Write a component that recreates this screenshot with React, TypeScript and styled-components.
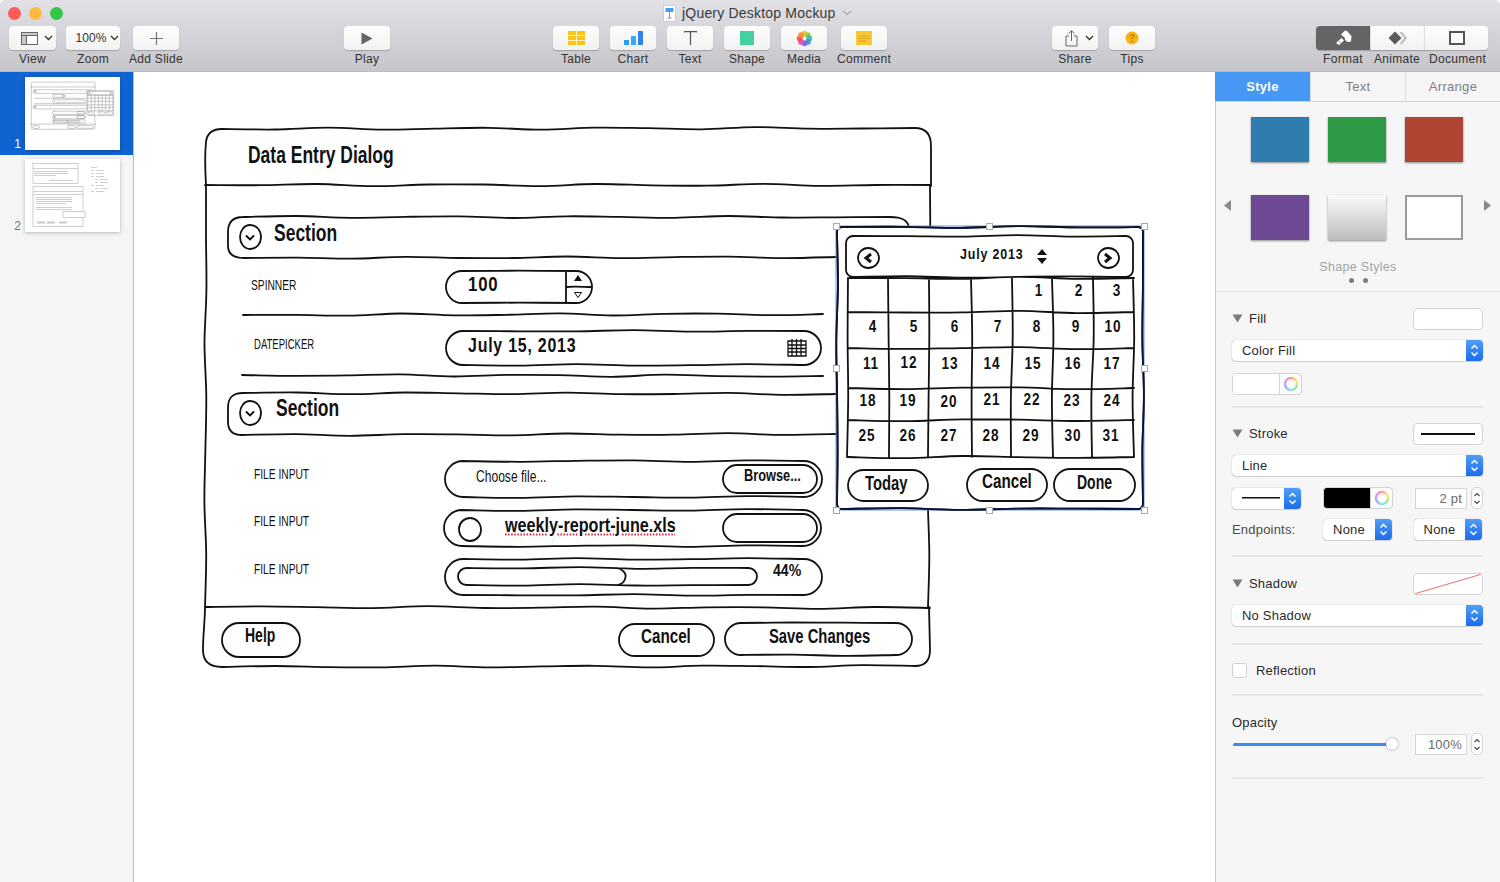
import React from "react";
import styled, { createGlobalStyle } from "styled-components";

const GlobalStyle = createGlobalStyle`
  html, body { margin: 0; padding: 0; height: 100%; background: #fff; overflow: hidden; }
  body { font-family: "Liberation Sans", Arial, sans-serif; }
  #root { height: 100%; }
`;

/* ---------- hand drawn line helpers ---------- */

type Pt = [number, number];

const n1 = (v: number) => Math.round(v * 10) / 10;

// wobbly line from a to b, returned as C segments (no moveto)
function wave(x1: number, y1: number, x2: number, y2: number, seed: number, amp = 0.9) {
  const len = Math.hypot(x2 - x1, y2 - y1);
  if (len < 1) return "";
  const n = Math.max(1, Math.round(len / 55));
  const nx = -(y2 - y1) / len;
  const ny = (x2 - x1) / len;
  const pts: Pt[] = [];
  for (let i = 0; i <= n; i++) {
    const t = i / n;
    const o = i === 0 || i === n ? 0 : amp * Math.sin(seed * 12.9 + i * 2.3);
    pts.push([x1 + (x2 - x1) * t + nx * o, y1 + (y2 - y1) * t + ny * o]);
  }
  let d = "";
  for (let i = 0; i < n; i++) {
    const p0 = pts[Math.max(0, i - 1)];
    const p1 = pts[i];
    const p2 = pts[i + 1];
    const p3 = pts[Math.min(n, i + 2)];
    d += `C${n1(p1[0] + (p2[0] - p0[0]) / 6)} ${n1(p1[1] + (p2[1] - p0[1]) / 6)} ${n1(p2[0] - (p3[0] - p1[0]) / 6)} ${n1(p2[1] - (p3[1] - p1[1]) / 6)} ${n1(p2[0])} ${n1(p2[1])}`;
  }
  return d;
}

const stroke = (x1: number, y1: number, x2: number, y2: number, seed: number, amp = 0.9) =>
  `M${x1} ${y1}${wave(x1, y1, x2, y2, seed, amp)}`;

function rrect(x1: number, y1: number, x2: number, y2: number, r: number, seed: number) {
  const k = r * 0.45;
  return (
    `M${x1 + r} ${y1}` +
    wave(x1 + r, y1, x2 - r, y1, seed) +
    `C${x2 - k} ${y1} ${x2} ${y1 + k} ${x2} ${y1 + r}` +
    wave(x2, y1 + r, x2, y2 - r, seed + 1) +
    `C${x2} ${y2 - k} ${x2 - k} ${y2} ${x2 - r} ${y2}` +
    wave(x2 - r, y2, x1 + r, y2, seed + 2) +
    `C${x1 + k} ${y2} ${x1} ${y2 - k} ${x1} ${y2 - r}` +
    wave(x1, y2 - r, x1, y1 + r, seed + 3) +
    `C${x1} ${y1 + k} ${x1 + k} ${y1} ${x1 + r} ${y1}Z`
  );
}

const pill = (x1: number, y1: number, x2: number, y2: number, seed: number) =>
  rrect(x1, y1, x2, y2, (y2 - y1) / 2, seed);

const dialogPaths = [
  // header
  "M206 185C205 168 205 152 206 142C207 133 213 129 222 129" +
    wave(222, 129, 915, 128, 1, 1.2) +
    "C925 128 931 133 931 146L931 186",
  stroke(205, 185, 931, 185, 2, 1.2),
  // sides
  stroke(206, 185, 205, 607, 3, 1.1),
  stroke(930, 186, 928, 607, 4, 1.1),
  // footer
  stroke(205, 607, 930, 608, 5, 1.1),
  "M205 607C205 620 203 635 203 650C203 662 210 667 222 667" +
    wave(222, 667, 915, 666, 6, 1) +
    "C925 666 930 660 930 650L929 607",
  // first section bar
  "M836 257" +
    wave(836, 257, 244, 258, 7, 1) +
    "C233 258 228 254 228 246L228 232C228 222 233 217 243 217" +
    wave(243, 217, 890, 217, 8, 1) +
    "C902 217 908 220 909 228",
  // second section bar
  "M836 434" +
    wave(836, 434, 242, 435, 9, 1) +
    "C232 435 228 430 228 422L228 408C228 398 232 393 243 393" +
    wave(243, 393, 836, 394, 10, 1),
  // spinner
  pill(446, 271, 592, 303, 11),
  "M566 271L566 303M566 287C575 286 584 287 592 287",
  // rows
  stroke(243, 315, 823, 314, 12, 1.2),
  pill(446, 331, 821, 365, 13),
  stroke(242, 375, 823, 376, 14, 1.2),
  // file inputs
  pill(445, 461, 822, 497, 15),
  pill(723, 465, 817, 493, 16),
  pill(444, 510, 821, 546, 17),
  pill(723, 514, 817, 542, 18),
  "M470 518C476 518 481 523 481 530C481 536 476 541 470 541C464 541 459 536 459 529C459 523 464 518 470 518Z",
  pill(445, 559, 822, 595, 19),
  pill(458, 568, 757, 585, 20),
  "M617 568C624 570 627 574 625 579C624 582 622 584 618 585",
  // footer buttons
  pill(222, 623, 300, 657, 21),
  pill(619, 624, 714, 656, 22),
  pill(725, 623, 912, 655, 23),
  // section arrows
  "M250 225C257 225 261 231 261 237C261 243 257 249 250 249C244 249 240 243 240 237C240 231 244 225 250 225Z",
  "M246.500 236L250 239.500L253.500 236",
  "M250 401C257 401 261 407 261 413C261 419 257 425 250 425C244 425 240 419 240 413C240 407 244 401 250 401Z",
  "M246.500 412L250 415.500L253.500 412",
];

const COLS = [848, 888, 929, 971, 1012, 1052, 1093, 1133];
const ROWS = [278, 312, 348, 388, 420, 457];

const calendarPaths = [
  rrect(846, 236, 1133, 277, 7, 31),
  "M868 248C875 248 879 253 879 258C879 263 875 268 868 268C862 268 858 263 858 258C858 253 862 248 868 248Z",
  "M1108 248C1115 248 1119 253 1119 258C1119 263 1115 268 1108 268C1102 268 1098 263 1098 258C1098 253 1102 248 1108 248Z",
  ...COLS.map((x, i) => stroke(x, 278, x + (i % 2 ? 1 : -1), 457, 40 + i, 1.1)),
  ...ROWS.map((y, i) => stroke(848, y, 1134, y, 50 + i, 1.2)),
  pill(848, 470, 928, 501, 60),
  pill(967, 469, 1047, 501, 61),
  pill(1054, 469, 1135, 501, 62),
];

const calendarFrame = rrect(837, 227, 1143, 509, 5, 30);

const Sketch = ({ width }: { width: number }) => (
  <>
    <path d={dialogPaths.join("")} fill="none" stroke="#111" strokeWidth={width} strokeLinecap="round" />
    <path d={calendarFrame} fill="#fff" stroke="#111" strokeWidth={width} />
    <path d={calendarPaths.join("")} fill="none" stroke="#111" strokeWidth={width} strokeLinecap="round" />
  </>
);

/* ---------- window ---------- */

const Window = styled.div`
  display: flex;
  flex-direction: column;
  width: 1500px;
  height: 882px;
  overflow: hidden;
`;

const Toolbar = styled.header`
  flex: none;
  height: 72px;
  box-sizing: border-box;
  background: linear-gradient(#e2e1e5, #c6c5c9);
  border-radius: 5px 5px 0 0;
  border-bottom: 1px solid #bdbcc0;
`;

const TitleRow = styled.div`
  display: flex;
  align-items: center;
  height: 26px;
  padding-left: 8px;
`;

const Lights = styled.div`
  display: flex;
  gap: 8px;
`;

const Light = styled.span<{ $c: string }>`
  width: 13px;
  height: 13px;
  border-radius: 50%;
  background: ${(p) => p.$c};
`;

const Title = styled.div`
  display: flex;
  align-items: center;
  gap: 6px;
  margin-left: 600px;
  font-size: 14px;
  letter-spacing: 0.2px;
  color: #3a3a3c;
`;

const Tools = styled.div`
  display: flex;
  padding-left: 9px;
`;

const Tool = styled.div<{ $w?: number; $ml?: number }>`
  display: flex;
  flex-direction: column;
  align-items: center;
  width: ${(p) => p.$w ?? 46}px;
  margin-left: ${(p) => p.$ml ?? 11}px;
`;

const ToolButton = styled.div`
  display: flex;
  align-items: center;
  justify-content: center;
  gap: 4px;
  width: 100%;
  height: 24px;
  border-radius: 4px;
  background: linear-gradient(#fdfdfd, #f2f2f2);
  box-shadow: 0 1px 1px rgba(0, 0, 0, 0.22);
  font-size: 12px;
  letter-spacing: 0.1px;
  color: #333;
`;

const MenuButton = styled(ToolButton)<{ $gap: number }>`
  box-sizing: border-box;
  padding-left: 8px;
  gap: ${(p) => p.$gap}px;
`;

const ToolLabel = styled.span`
  margin-top: 2px;
  font-size: 12px;
  line-height: 15px;
  letter-spacing: 0.3px;
  white-space: nowrap;
  color: #333;
`;

const DocumentLabel = styled(ToolLabel)`
  margin-left: 3px;
`;

const Segments = styled.div`
  display: flex;
  margin-left: 161px;
  width: 172px;
`;

const SegTool = styled.div<{ $w: number }>`
  display: flex;
  flex-direction: column;
  align-items: center;
  width: ${(p) => p.$w}px;
`;

const SegButton = styled.div<{ $on?: boolean; $pos: "first" | "mid" | "last" }>`
  display: flex;
  align-items: center;
  justify-content: center;
  width: 100%;
  height: 24px;
  box-shadow: 0 1px 1px rgba(0, 0, 0, 0.22);
  background: ${(p) => (p.$on ? "#646466" : "linear-gradient(#fdfdfd, #f2f2f2)")};
  border-radius: ${(p) => (p.$pos === "first" ? "4px 0 0 4px" : p.$pos === "last" ? "0 4px 4px 0" : "0")};
  border-left: ${(p) => (p.$pos === "first" ? "none" : "1px solid #dedede")};
  box-sizing: border-box;
`;

const Main = styled.main`
  flex: 1;
  display: flex;
  min-height: 0;
`;

/* ---------- slide navigator ---------- */

const Navigator = styled.nav`
  flex: none;
  width: 134px;
  box-sizing: border-box;
  background: #f5f5f5;
  border-right: 1px solid #bcbcbc;
`;

const SlideRow = styled.div<{ $on?: boolean; $h: number }>`
  display: flex;
  height: ${(p) => p.$h}px;
  box-sizing: border-box;
  padding-top: ${(p) => (p.$on ? 5 : 4)}px;
  background: ${(p) => (p.$on ? "#0f64d2" : "transparent")};
`;

const SlideNo = styled.span<{ $on?: boolean }>`
  align-self: flex-start;
  width: 25px;
  margin-top: 60px;
  padding-right: 4px;
  box-sizing: border-box;
  text-align: right;
  font-size: 12px;
  line-height: 14px;
  color: ${(p) => (p.$on ? "#fff" : "#6d7480")};
`;

const Thumb = styled.svg`
  display: block;
  width: 95px;
  height: 73px;
  background: #fff;
  box-shadow: 0 1px 4px rgba(0, 0, 0, 0.25);
`;

/* ---------- canvas ---------- */

const Canvas = styled.section`
  position: relative;
  flex: 1;
  background: #fff;
  overflow: hidden;
`;

const Drawing = styled.svg`
  position: absolute;
  left: 0;
  top: 0;
  width: 1081px;
  height: 810px;
`;

const Ink = styled.span<{ $x: number; $y: number; $sx?: number }>`
  position: absolute;
  left: ${(p) => p.$x - 134}px;
  top: ${(p) => p.$y - 72}px;
  transform: translateY(-50%) scaleX(${(p) => p.$sx ?? 0.76});
  transform-origin: left center;
  font-family: "Liberation Sans", Arial, sans-serif;
  font-weight: 700;
  color: #111;
  white-space: nowrap;
  line-height: 1;
`;

const DialogTitle = styled(Ink)`
  font-size: 23px;
`;

const SectionTitle = styled(Ink)`
  font-size: 23px;
`;

const FieldLabel = styled(Ink)`
  font-size: 14px;
  font-weight: 400;
`;

const FieldValue = styled(Ink)`
  font-size: 21px;
  letter-spacing: 1px;
`;

const FileHint = styled(Ink)`
  font-size: 17px;
  font-weight: 400;
`;

const FileName = styled(Ink)`
  font-size: 21px;
  text-decoration: underline dotted #e0263a;
  text-underline-offset: 2px;
`;

const SmallButton = styled(Ink)`
  font-size: 16px;
`;

const BigButton = styled(Ink)`
  font-size: 20px;
`;

const Month = styled(Ink)`
  font-size: 15px;
  letter-spacing: 1px;
`;

const Day = styled(Ink)`
  transform: translate(-50%, -50%) scaleX(0.85);
  transform-origin: center;
  font-size: 16px;
  letter-spacing: 1px;
`;

const Handle = styled.i<{ $x: number; $y: number }>`
  position: absolute;
  left: ${(p) => p.$x - 134 - 3}px;
  top: ${(p) => p.$y - 72 - 3}px;
  width: 5px;
  height: 5px;
  background: #fff;
  border: 1px solid #a9a9a9;
`;

/* ---------- inspector ---------- */

const Inspector = styled.aside`
  flex: none;
  width: 285px;
  box-sizing: border-box;
  background: #f6f6f6;
  border-left: 1px solid #c8c8c8;
  color: #2a2a2a;
  font-size: 13px;
  letter-spacing: 0.2px;
`;

const Tabs = styled.div`
  display: flex;
  height: 30px;
  margin-left: -1px;
  box-sizing: border-box;
  border-bottom: 1px solid #d4d4d4;
`;

const Tab = styled.div<{ $on?: boolean }>`
  flex: ${(p) => (p.$on ? "none" : "1")};
  width: ${(p) => (p.$on ? "95px" : "auto")};
  display: flex;
  align-items: center;
  justify-content: center;
  font-size: 13px;
  letter-spacing: 0.3px;
  font-weight: ${(p) => (p.$on ? 700 : 400)};
  color: ${(p) => (p.$on ? "#fff" : "#7f7f7f")};
  background: ${(p) => (p.$on ? "#4798f5" : "#f6f6f6")};
  & + & {
    border-left: 1px solid #dcdcdc;
  }
`;

const Styles = styled.div`
  position: relative;
  height: 190px;
  box-sizing: border-box;
  padding: 15px 0 0 35px;
  border-bottom: 1px solid #e0e0e0;
`;

const SwatchGrid = styled.div`
  display: grid;
  grid-template-columns: repeat(3, 58px);
  grid-auto-rows: 45px;
  column-gap: 19px;
  row-gap: 33px;
`;

const Swatch = styled.div<{ $bg: string; $plain?: boolean }>`
  box-sizing: border-box;
  background: ${(p) => p.$bg};
  border: ${(p) => (p.$plain ? "2px solid #9a9a9a" : "none")};
  box-shadow: ${(p) => (p.$plain ? "none" : "0 1px 2px rgba(0, 0, 0, 0.45)")};
`;

const PageArrow = styled.svg<{ $side: "left" | "right" }>`
  position: absolute;
  top: 98px;
  ${(p) => (p.$side === "left" ? "left: 8px;" : "right: 9px;")}
`;

const StylesCaption = styled.div`
  margin: 20px 0 0 -35px;
  text-align: center;
  font-size: 12.5px;
  color: #a4a4a4;
  letter-spacing: 0.3px;
  line-height: 15px;
`;

const Dots = styled.div`
  display: flex;
  justify-content: center;
  gap: 9px;
  margin: 3px 0 0 -35px;
`;

const Dot = styled.i`
  width: 5px;
  height: 5px;
  border-radius: 50%;
  background: #7d7d7d;
`;

const Group = styled.section<{ $top: number; $bottom: number }>`
  margin: 0 17px 0 16px;
  padding: ${(p) => p.$top}px 0 ${(p) => p.$bottom}px;
  border-bottom: 2px solid #e6e6e6;
`;

const Row = styled.div<{ $mt?: number }>`
  display: flex;
  align-items: center;
  justify-content: space-between;
  margin-top: ${(p) => p.$mt ?? 0}px;
`;

const EndpointRow = styled(Row)`
  justify-content: flex-start;
`;

const GroupHead = styled.div`
  display: flex;
  align-items: center;
  gap: 6px;
  font-size: 13px;
`;

const DisclosureHead = styled(GroupHead)`
  margin-top: -2px;
`;

const Well = styled.div`
  position: relative;
  overflow: hidden;
  display: flex;
  align-items: center;
  justify-content: center;
  width: 70px;
  height: 22px;
  box-sizing: border-box;
  background: #fff;
  border: 1px solid #d3d3d3;
  border-radius: 4px;
`;

const Select = styled.div<{ $w?: number; $ml?: number }>`
  display: flex;
  align-items: center;
  width: ${(p) => (p.$w ? `${p.$w}px` : "100%")};
  height: 21px;
  margin-left: ${(p) => p.$ml ?? 0}px;
  box-sizing: border-box;
  background: #fff;
  border-radius: 4px;
  box-shadow: 0 0 1px rgba(0, 0, 0, 0.45), 0 1px 1px rgba(0, 0, 0, 0.12);
  overflow: hidden;
`;

const SelectText = styled.span<{ $center?: boolean }>`
  flex: 1;
  display: flex;
  align-items: center;
  justify-content: ${(p) => (p.$center ? "center" : "flex-start")};
  padding-left: ${(p) => (p.$center ? 0 : 10)}px;
  font-size: 13px;
  letter-spacing: 0.2px;
`;

const SelectArrows = styled.span`
  flex: none;
  display: flex;
  align-items: center;
  justify-content: center;
  width: 17px;
  height: 100%;
  background: linear-gradient(#4f9ff7, #1c6bea);
`;

const ColorWell = styled.div`
  display: flex;
  width: 70px;
  height: 22px;
  box-sizing: border-box;
  border: 1px solid #d3d3d3;
  border-radius: 4px;
  overflow: hidden;
  background: #fbfbfb;
`;

const ColorFace = styled.div<{ $black?: boolean }>`
  flex: 1;
  background: ${(p) => (p.$black ? "#000" : "#fff")};
  border-right: 1px solid #d3d3d3;
`;

const ColorWheel = styled.div`
  flex: none;
  width: 21px;
  display: flex;
  align-items: center;
  justify-content: center;
  &::after {
    content: "";
    width: 14px;
    height: 14px;
    box-sizing: border-box;
    border-radius: 50%;
    background: radial-gradient(#fff 35%, transparent 70%),
      conic-gradient(#ff6b6b, #ffd93b, #6ee66e, #5fd8e8, #6a8cff, #d56be8, #ff6b6b);
  }
`;

const Cluster = styled.div`
  display: flex;
  align-items: center;
  gap: 4px;
`;

const Field = styled.div`
  width: 52px;
  height: 21px;
  box-sizing: border-box;
  padding-right: 4px;
  background: #fff;
  border: 1px solid #d6d6d6;
  text-align: right;
  font-size: 13px;
  line-height: 20px;
  color: #6a6a6a;
`;

const Stepper = styled.div`
  display: flex;
  align-items: center;
  justify-content: center;
  width: 12px;
  height: 22px;
  box-sizing: border-box;
  background: #fff;
  border: 1px solid #d3d3d3;
  border-radius: 5px;
`;

const Caption = styled.span`
  flex: none;
  width: 91px;
  font-size: 13px;
  color: #4a4a4a;
`;

const Check = styled.label`
  display: flex;
  align-items: center;
  gap: 9px;
  font-size: 13px;
`;

const Box = styled.span`
  width: 15px;
  height: 15px;
  box-sizing: border-box;
  background: #fff;
  border: 1px solid #d0d0d0;
  border-radius: 3px;
`;

const Slider = styled.div`
  position: relative;
  width: 159px;
  height: 3px;
  margin-left: 1px;
  border-radius: 2px;
  background: #3a8cf0;
  &::after {
    content: "";
    position: absolute;
    right: -6px;
    top: -5px;
    width: 12px;
    height: 12px;
    border-radius: 50%;
    background: #fff;
    box-shadow: 0 0 2px rgba(0, 0, 0, 0.5);
  }
`;

/* ---------- icons ---------- */

const Chevron = () => (
  <svg width="9" height="6" viewBox="0 0 9 6">
    <path d="M1 1l3.5 3.5L8 1" fill="none" stroke="#333" strokeWidth="1.3" />
  </svg>
);

const UpDown = () => (
  <svg width="9" height="15" viewBox="0 0 9 15">
    <path d="M1.5 5.5l3-3 3 3M1.5 9.5l3 3 3-3" fill="none" stroke="#fff" strokeWidth="1.5" />
  </svg>
);

const SmallUpDown = () => (
  <svg width="8" height="15" viewBox="0 0 8 15">
    <path d="M1.5 5l2.5-2.5L6.500 5M1.500 10l2.500 2.500L6.500 10" fill="none" stroke="#444" strokeWidth="1.100" />
  </svg>
);

const Disclosure = () => (
  <svg width="11" height="9" viewBox="0 0 11 9">
    <path d="M0.500 0.500h10L5.500 8.500z" fill="#7b7b7b" />
  </svg>
);

const DocIcon = () => (
  <svg width="13" height="17" viewBox="0 0 13 17">
    <rect x="0.500" y="0.500" width="12" height="16" fill="#fff" stroke="#cfcfcf" />
    <rect x="2.500" y="3" width="8" height="4" fill="#4aa0e8" />
    <path d="M6.500 7v6M4.500 13h4" stroke="#7f93a8" strokeWidth="1" />
  </svg>
);

const flowerColors = ["#f4c22e", "#8ccf3f", "#35b7a4", "#3f8fe8", "#7d5fd8", "#d94fb0", "#ee4a4a", "#f5892d"];

const Flower = () => (
  <svg width="17" height="17" viewBox="0 0 17 17">
    {flowerColors.map((c, i) => {
      const a = (i * Math.PI) / 4 - Math.PI / 2;
      return <circle key={c} cx={8.500 + 4.800 * Math.cos(a)} cy={8.500 + 4.800 * Math.sin(a)} r="2.900" fill={c} opacity="0.9" />;
    })}
    <circle cx="8.500" cy="8.500" r="1.500" fill="#fff" opacity="0.6" />
  </svg>
);

const days: { d: number; x: number; y: number }[] = [
  { d: 1, x: 1039, y: 291 }, { d: 2, x: 1079, y: 291 }, { d: 3, x: 1117, y: 291 },
  { d: 4, x: 873, y: 327 }, { d: 5, x: 914, y: 327 }, { d: 6, x: 955, y: 327 }, { d: 7, x: 998, y: 327 },
  { d: 8, x: 1037, y: 327 }, { d: 9, x: 1076, y: 327 }, { d: 10, x: 1113, y: 327 },
  { d: 11, x: 871, y: 364 }, { d: 12, x: 909, y: 363 }, { d: 13, x: 950, y: 364 }, { d: 14, x: 992, y: 364 },
  { d: 15, x: 1033, y: 364 }, { d: 16, x: 1073, y: 364 }, { d: 17, x: 1112, y: 364 },
  { d: 18, x: 868, y: 401 }, { d: 19, x: 908, y: 401 }, { d: 20, x: 949, y: 402 }, { d: 21, x: 992, y: 400 },
  { d: 22, x: 1032, y: 400 }, { d: 23, x: 1072, y: 401 }, { d: 24, x: 1112, y: 401 },
  { d: 25, x: 867, y: 436 }, { d: 26, x: 908, y: 436 }, { d: 27, x: 949, y: 436 }, { d: 28, x: 991, y: 436 },
  { d: 29, x: 1031, y: 436 }, { d: 30, x: 1073, y: 436 }, { d: 31, x: 1111, y: 436 },
];

const handles: Pt[] = [
  [836, 226], [989, 226], [1144, 226], [836, 368], [1144, 368], [836, 510], [989, 510], [1144, 510],
];

export default function App() {
  return (
    <Window>
      <GlobalStyle />
      <Toolbar>
        <TitleRow>
          <Lights>
            <Light $c="#fc5b57" />
            <Light $c="#fdbc40" />
            <Light $c="#33c748" />
          </Lights>
          <Title>
            <DocIcon />
            jQuery Desktop Mockup
            <svg width="10" height="6" viewBox="0 0 10 6">
              <path d="M1 1l4 3.500L9 1" fill="none" stroke="#a8a8a8" strokeWidth="1.200" />
            </svg>
          </Title>
        </TitleRow>
        <Tools>
          <Tool $w={47} $ml={0}>
            <MenuButton $gap={6}>
              <svg width="17" height="13" viewBox="0 0 17 13">
                <rect x="0.500" y="0.500" width="16" height="12" fill="#fff" stroke="#666" />
                <path d="M0.500 0.500h16v3h-16zM0.500 3.500h5v9h-5z" fill="#c9c9c9" stroke="#666" />
              </svg>
              <Chevron />
            </MenuButton>
            <ToolLabel>View</ToolLabel>
          </Tool>
          <Tool $w={54} $ml={10}>
            <MenuButton $gap={3}>
              100%
              <Chevron />
            </MenuButton>
            <ToolLabel>Zoom</ToolLabel>
          </Tool>
          <Tool $ml={13}>
            <ToolButton>
              <svg width="13" height="13" viewBox="0 0 13 13">
                <path d="M6.500 0v13M0 6.500h13" stroke="#777" strokeWidth="1.200" />
              </svg>
            </ToolButton>
            <ToolLabel>Add Slide</ToolLabel>
          </Tool>
          <Tool $ml={165}>
            <ToolButton>
              <svg width="12" height="13" viewBox="0 0 12 13">
                <path d="M0.500 0.500L11.500 6.500L0.500 12.500z" fill="#666" />
              </svg>
            </ToolButton>
            <ToolLabel>Play</ToolLabel>
          </Tool>
          <Tool $ml={163}>
            <ToolButton>
              <svg width="17" height="14" viewBox="0 0 17 14">
                <rect width="17" height="14" fill="#fcc419" />
                <path d="M0 4.500h17M0 9.500h17M8.500 0v14" stroke="#fff2b8" strokeWidth="1" />
              </svg>
            </ToolButton>
            <ToolLabel>Table</ToolLabel>
          </Tool>
          <Tool>
            <ToolButton>
              <svg width="19" height="14" viewBox="0 0 19 14">
                <path d="M0 9h5v5H0z" fill="#2f9bf2" />
                <path d="M7 5h5v9H7z" fill="#3ba7f5" />
                <path d="M14 0h5v14h-5z" fill="#2f86e8" />
              </svg>
            </ToolButton>
            <ToolLabel>Chart</ToolLabel>
          </Tool>
          <Tool>
            <ToolButton>
              <svg width="13" height="14" viewBox="0 0 13 14">
                <path d="M0.500 1.500V0.600h12v0.900M6.500 0.600V14" fill="none" stroke="#555" strokeWidth="1.200" />
              </svg>
            </ToolButton>
            <ToolLabel>Text</ToolLabel>
          </Tool>
          <Tool>
            <ToolButton>
              <svg width="14" height="14" viewBox="0 0 14 14">
                <rect width="14" height="14" fill="#43d19e" />
              </svg>
            </ToolButton>
            <ToolLabel>Shape</ToolLabel>
          </Tool>
          <Tool>
            <ToolButton>
              <Flower />
            </ToolButton>
            <ToolLabel>Media</ToolLabel>
          </Tool>
          <Tool $ml={14}>
            <ToolButton>
              <svg width="16" height="14" viewBox="0 0 16 14">
                <rect width="16" height="14" fill="#fbc830" />
                <path d="M2 5h12M2 7.500h12M2 10h8" stroke="#c99a1c" strokeWidth="0.800" />
              </svg>
            </ToolButton>
            <ToolLabel>Comment</ToolLabel>
          </Tool>
          <Tool $ml={165}>
            <MenuButton $gap={7}>
              <svg width="13" height="17" viewBox="0 0 13 17">
                <path d="M4 6H1v10h11V6H9M6.500 11V1M3.500 3.500L6.500 0.800l3 2.700" fill="none" stroke="#666" strokeWidth="1" />
              </svg>
              <Chevron />
            </MenuButton>
            <ToolLabel>Share</ToolLabel>
          </Tool>
          <Tool>
            <ToolButton>
              <svg width="14" height="14" viewBox="0 0 14 14">
                <circle cx="7" cy="7" r="6.500" fill="#fbb116" />
                <path d="M5.200 5.300c0-2.300 3.700-2.300 3.700 0 0 1.300-1.900 1.300-1.900 2.900M7 9.700v1.200" fill="none" stroke="#8a5e06" strokeWidth="1" />
              </svg>
            </ToolButton>
            <ToolLabel>Tips</ToolLabel>
          </Tool>
          <Segments>
            <SegTool $w={54}>
              <SegButton $on $pos="first">
                <svg width="17" height="16" viewBox="0 0 17 16">
                  <path d="M6 4.500L10 0.500l2 0.500 4.500 5-0.500 5.500-3 0.500-2.500-1.500-1-3z" fill="#fff" />
                  <path d="M6.500 8L9 10.500 4 15 1 13z" fill="#fff" />
                  <path d="M4.500 11.500l1 1" stroke="#646466" strokeWidth="1" />
                </svg>
              </SegButton>
              <ToolLabel>Format</ToolLabel>
            </SegTool>
            <SegTool $w={54}>
              <SegButton $pos="mid">
                <svg width="19" height="14" viewBox="0 0 19 14">
                  <path d="M14 1l5 6-5 6h-2.500l5-6-5-6z" fill="#b9b9b9" />
                  <path d="M7 0.500L13.500 7 7 13.500 0.500 7z" fill="#5c5c5c" />
                </svg>
              </SegButton>
              <ToolLabel>Animate</ToolLabel>
            </SegTool>
            <SegTool $w={64}>
              <SegButton $pos="last">
                <svg width="16" height="14" viewBox="0 0 16 14">
                  <rect x="1" y="1" width="14" height="12" fill="#fff" stroke="#555" strokeWidth="2" />
                </svg>
              </SegButton>
              <DocumentLabel>Document</DocumentLabel>
            </SegTool>
          </Segments>
        </Tools>
      </Toolbar>

      <Main>
        <Navigator>
          <SlideRow $on $h={83}>
            <SlideNo $on>1</SlideNo>
            <Thumb viewBox="134 72 1081 830">
              <g opacity="0.5">
                <Sketch width={5} />
              </g>
            </Thumb>
          </SlideRow>
          <SlideRow $h={80}>
            <SlideNo>2</SlideNo>
            <Thumb viewBox="0 0 95 72">
              <g fill="none" stroke="#a0a0a0" strokeWidth="0.500">
                <rect x="8" y="4" width="45" height="20" />
                <path d="M8 9h45M9 12h34M9 14h34M9 16h22M24 21h24" />
                <rect x="8" y="27" width="50" height="40" />
                <path d="M8 32h50M8 35h50M11 38h36M11 40h36M11 42h36M11 44h30M11 48h36M11 50h36" />
                <rect x="38" y="52" width="22" height="6" fill="#fff" />
                <path d="M12 63h8M22 63h8M34 63h8" strokeWidth="2" stroke="#c9c9c9" />
                <path d="M66 8h6M66 11h3M71 11h8M66 14h3M71 14h8M66 17h3M71 17h8M70 20h3M75 20h8M70 23h3M75 23h8M66 26h3M71 26h8M70 29h3M75 29h8M66 32h3M71 32h8" />
              </g>
            </Thumb>
          </SlideRow>
        </Navigator>

        <Canvas>
          <Drawing viewBox="134 72 1081 810">
            <Sketch width={1.8} />
            <rect x="836" y="226" width="308" height="284" fill="none" stroke="#6d8fe0" strokeWidth="1" />
            <path d={calendarFrame} fill="none" stroke="#0a1230" strokeWidth="1.800" />
            <g fill="#111">
              <path d="M578 275l4 6h-8z" />
              <path d="M1042 249l5 6h-10zM1037 258h10l-5 6z" />
            </g>
            <path d="M574.500 292.500h7l-3.500 5z" fill="none" stroke="#111" strokeWidth="1" />
            <path d="M871 254l-5 4 5 4" fill="none" stroke="#111" strokeWidth="3" />
            <path d="M1105 254l5 4-5 4" fill="none" stroke="#111" strokeWidth="3" />
            <path
              d="M788 341h18v15h-18zM788 345h18M788 348.500h18M788 352h18M792 339v17M796.500 339v17M801 339v17"
              fill="none"
              stroke="#111"
              strokeWidth="1.300"
            />
          </Drawing>

          <DialogTitle $x={248} $y={155}>Data Entry Dialog</DialogTitle>
          <SectionTitle $x={274} $y={233}>Section</SectionTitle>
          <FieldLabel $x={251} $y={285} $sx={0.73}>SPINNER</FieldLabel>
          <FieldValue $x={468} $y={283} $sx={0.8}>100</FieldValue>
          <FieldLabel $x={254} $y={344} $sx={0.68}>DATEPICKER</FieldLabel>
          <FieldValue $x={468} $y={344} $sx={0.76}>July 15, 2013</FieldValue>
          <SectionTitle $x={276} $y={408}>Section</SectionTitle>
          <FieldLabel $x={254} $y={474} $sx={0.73}>FILE INPUT</FieldLabel>
          <FileHint $x={476} $y={476} $sx={0.71}>Choose file...</FileHint>
          <SmallButton $x={744} $y={476} $sx={0.8}>Browse...</SmallButton>
          <FieldLabel $x={254} $y={521} $sx={0.73}>FILE INPUT</FieldLabel>
          <FileName $x={505} $y={524} $sx={0.77}>weekly-report-june.xls</FileName>
          <FieldLabel $x={254} $y={569} $sx={0.73}>FILE INPUT</FieldLabel>
          <SmallButton $x={773} $y={571} $sx={0.88}>44%</SmallButton>
          <BigButton $x={245} $y={635} $sx={0.7}>Help</BigButton>
          <BigButton $x={641} $y={636}>Cancel</BigButton>
          <BigButton $x={769} $y={636} $sx={0.74}>Save Changes</BigButton>

          <Month $x={960} $y={253} $sx={0.83}>July 2013</Month>
          {days.map((c) => (
            <Day key={c.d} $x={c.x} $y={c.y}>{c.d}</Day>
          ))}
          <BigButton $x={865} $y={483} $sx={0.74}>Today</BigButton>
          <BigButton $x={982} $y={481}>Cancel</BigButton>
          <BigButton $x={1077} $y={482} $sx={0.7}>Done</BigButton>

          {handles.map(([x, y]) => (
            <Handle key={`${x}-${y}`} $x={x} $y={y} />
          ))}
        </Canvas>

        <Inspector>
          <Tabs>
            <Tab $on>Style</Tab>
            <Tab>Text</Tab>
            <Tab>Arrange</Tab>
          </Tabs>
          <Styles>
            <SwatchGrid>
              <Swatch $bg="#2f7dae" />
              <Swatch $bg="#2e9a46" />
              <Swatch $bg="#b04433" />
              <Swatch $bg="#6f4a94" />
              <Swatch $bg="linear-gradient(#fafafa, #bdbdbd)" />
              <Swatch $bg="#fff" $plain />
            </SwatchGrid>
            <PageArrow $side="left" width="7" height="11" viewBox="0 0 7 11">
              <path d="M7 0v11L0 5.500z" fill="#8a8a8a" />
            </PageArrow>
            <PageArrow $side="right" width="7" height="11" viewBox="0 0 7 11">
              <path d="M0 0v11l7-5.500z" fill="#8a8a8a" />
            </PageArrow>
            <StylesCaption>Shape Styles</StylesCaption>
            <Dots>
              <Dot />
              <Dot />
            </Dots>
          </Styles>

          <Group $top={16} $bottom={11}>
            <Row>
              <DisclosureHead>
                <Disclosure />
                Fill
              </DisclosureHead>
              <Well />
            </Row>
            <Row $mt={10}>
              <Select>
                <SelectText>Color Fill</SelectText>
                <SelectArrows><UpDown /></SelectArrows>
              </Select>
            </Row>
            <Row $mt={12}>
              <ColorWell>
                <ColorFace />
                <ColorWheel />
              </ColorWell>
            </Row>
          </Group>

          <Group $top={15} $bottom={15}>
            <Row>
              <DisclosureHead>
                <Disclosure />
                Stroke
              </DisclosureHead>
              <Well>
                <svg width="54" height="2" viewBox="0 0 54 2">
                  <rect width="54" height="2" fill="#111" />
                </svg>
              </Well>
            </Row>
            <Row $mt={10}>
              <Select>
                <SelectText>Line</SelectText>
                <SelectArrows><UpDown /></SelectArrows>
              </Select>
            </Row>
            <Row $mt={11}>
              <Select $w={69}>
                <SelectText>
                  <svg width="38" height="2" viewBox="0 0 38 2">
                    <rect width="38" height="1.500" fill="#111" />
                  </svg>
                </SelectText>
                <SelectArrows><UpDown /></SelectArrows>
              </Select>
              <ColorWell>
                <ColorFace $black />
                <ColorWheel />
              </ColorWell>
              <Cluster>
                <Field>2 pt</Field>
                <Stepper><SmallUpDown /></Stepper>
              </Cluster>
            </Row>
            <EndpointRow $mt={10}>
              <Caption>Endpoints:</Caption>
              <Select $w={69}>
                <SelectText $center>None</SelectText>
                <SelectArrows><UpDown /></SelectArrows>
              </Select>
              <Select $w={68} $ml={22}>
                <SelectText $center>None</SelectText>
                <SelectArrows><UpDown /></SelectArrows>
              </Select>
            </EndpointRow>
          </Group>

          <Group $top={16} $bottom={17}>
            <Row>
              <DisclosureHead>
                <Disclosure />
                Shadow
              </DisclosureHead>
              <Well>
                <svg width="68" height="20" viewBox="0 0 68 20" preserveAspectRatio="none">
                  <path d="M0 20L68 0" stroke="#f26d6d" strokeWidth="1" />
                </svg>
              </Well>
            </Row>
            <Row $mt={10}>
              <Select>
                <SelectText>No Shadow</SelectText>
                <SelectArrows><UpDown /></SelectArrows>
              </Select>
            </Row>
          </Group>

          <Group $top={18} $bottom={16}>
            <Check>
              <Box />
              Reflection
            </Check>
          </Group>

          <Group $top={19} $bottom={22}>
            <GroupHead>Opacity</GroupHead>
            <Row $mt={3}>
              <Slider />
              <Cluster>
                <Field>100%</Field>
                <Stepper><SmallUpDown /></Stepper>
              </Cluster>
            </Row>
          </Group>
        </Inspector>
      </Main>
    </Window>
  );
}
